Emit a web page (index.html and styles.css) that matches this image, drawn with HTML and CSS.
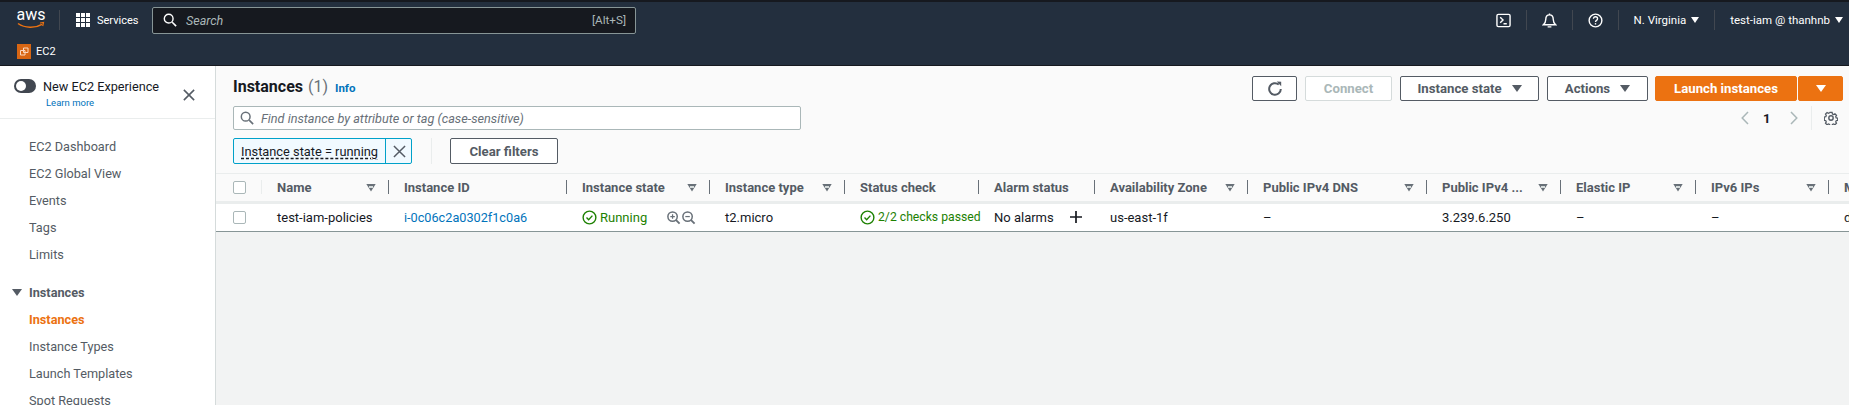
FILE: index.html
```html
<!DOCTYPE html>
<html lang="en">
<head>
<meta charset="utf-8">
<title>Instances | EC2</title>
<link rel="stylesheet" href="styles.css">
</head>
<body>
<header class="console">
  <div class="nav-top">
    <svg class="aws" viewBox="0 0 30 26" width="30" height="26"><text x="15" y="13" text-anchor="middle" class="aws-text">aws</text><path d="M2 16.500c7 4.800 17 5 24 .8" fill="none" stroke="#ec7211" stroke-width="1.500"/><path d="M24 16l3.500-.5-.8 3.500" fill="none" stroke="#ec7211" stroke-width="1.200"/></svg>
    <span class="sep sep-logo"></span>
    <svg class="grid-ic" viewBox="0 0 14 14" width="14" height="14"><path fill="#fff" d="M0 0h4v4H0zM5 0h4v4H5zM10 0h4v4h-4zM0 5h4v4H0zM5 5h4v4H5zM10 5h4v4h-4zM0 10h4v4H0zM5 10h4v4H5zM10 10h4v4h-4z"/></svg>
    <span class="services">Services</span>
    <div class="search">
      <svg viewBox="0 0 16 16" width="14" height="14"><circle cx="6.500" cy="6.500" r="5" fill="none" stroke="#fff" stroke-width="1.600"/><path d="M10.500 10.500l4.500 4.500" stroke="#fff" stroke-width="1.800"/></svg>
      <span class="search-ph">Search</span>
      <span class="search-key">[Alt+S]</span>
    </div>
    <div class="top-right">
      <svg viewBox="0 0 16 16" width="15" height="15"><rect x="1" y="1.500" width="14" height="13" rx="1.500" fill="none" stroke="#fff" stroke-width="1.500"/><path d="M4.500 4.500l3 3-3 3M8 11.500h3.500" fill="none" stroke="#fff" stroke-width="1.500"/></svg>
      <span class="sep"></span>
      <svg viewBox="0 0 16 16" width="15" height="15"><path d="M1.500 12.500c1.800-1.500 2.500-2.500 2.500-5.500 0-3 1.800-5 4-5s4 2 4 5c0 3 .7 4 2.500 5.500z" fill="none" stroke="#fff" stroke-width="1.500"/><path d="M6 14.800h4M8 .5v1.500" stroke="#fff" stroke-width="1.500"/></svg>
      <span class="sep"></span>
      <svg viewBox="0 0 16 16" width="15" height="15"><circle cx="8" cy="8" r="6.800" fill="none" stroke="#fff" stroke-width="1.500"/><path d="M5.800 6.200c0-1.300 1-2.200 2.200-2.200s2.200.9 2.200 2.100c0 1.800-2.200 1.700-2.200 3.400" fill="none" stroke="#fff" stroke-width="1.400"/><path d="M8 10.800v1.500" stroke="#fff" stroke-width="1.500"/></svg>
      <span class="sep"></span>
      <span class="top-menu">N. Virginia<i class="tri tri-light"></i></span>
      <span class="sep"></span>
      <span class="top-menu">test-iam @ thanhnb<i class="tri tri-light"></i></span>
    </div>
  </div>
  <div class="nav-sub">
    <svg viewBox="0 0 14 15" width="14" height="15"><rect width="14" height="15" fill="#d86613"/><path d="M6.500 4h4.500v4.500H6.500zM3.500 6.500H8V11H3.500z" fill="none" stroke="#fbd8bf" stroke-width="1"/></svg>
    <span>EC2</span>
  </div>
</header>
<div class="shell">
  <aside class="side">
    <div class="exp">
      <div class="exp-main">
        <div class="exp-row"><span class="toggle"></span><span>New EC2 Experience</span></div>
        <a class="learn">Learn more</a>
      </div>
      <svg class="x" viewBox="0 0 14 14" width="12" height="12"><path d="M1 1l12 12M13 1L1 13" stroke="#545b64" stroke-width="1.800"/></svg>
    </div>
    <nav class="side-nav">
      <a>EC2 Dashboard</a>
      <a>EC2 Global View</a>
      <a>Events</a>
      <a>Tags</a>
      <a>Limits</a>
      <h4><i class="tri tri-dark"></i>Instances</h4>
      <a class="on">Instances</a>
      <a>Instance Types</a>
      <a>Launch Templates</a>
      <a>Spot Requests</a>
    </nav>
  </aside>
  <main class="main">
    <section class="card">
      <div class="head">
        <div class="head-left">
          <div class="title"><h1>Instances</h1><span class="count">(1)</span><a class="info">Info</a></div>
          <div class="find">
            <svg viewBox="0 0 16 16" width="14" height="14"><circle cx="6.500" cy="6.500" r="5" fill="none" stroke="#687078" stroke-width="1.700"/><path d="M10.500 10.500l4.500 4.500" stroke="#687078" stroke-width="1.900"/></svg>
            <span>Find instance by attribute or tag (case-sensitive)</span>
          </div>
          <div class="filters">
            <div class="token"><span class="token-text"><u>Instance state = running</u></span><span class="token-x"><svg viewBox="0 0 14 14" width="13" height="13"><path d="M1 1l12 12M13 1L1 13" stroke="#545b64" stroke-width="1.600"/></svg></span></div>
            <span class="vbar"></span>
            <button class="btn clear">Clear filters</button>
          </div>
        </div>
        <div class="head-right">
          <div class="actions">
            <button class="btn refresh"><svg viewBox="0 0 16 16" width="16" height="16"><path d="M13.800 8a5.800 5.800 0 1 1-2-4.400" fill="none" stroke="#545b64" stroke-width="2"/><path d="M9.800 .5l4.400.2v4.600z" fill="#545b64"/></svg></button>
            <button class="btn dis">Connect</button>
            <button class="btn state">Instance state<i class="tri tri-dark"></i></button>
            <button class="btn act">Actions<i class="tri tri-dark"></i></button>
            <div class="launch"><button class="btn pri pri-a">Launch instances</button><button class="btn pri pri-b"><i class="tri tri-light"></i></button></div>
          </div>
          <div class="pager">
            <svg viewBox="0 0 8 14" width="8" height="14"><path d="M7 1L1.200 7 7 13" fill="none" stroke="#aab7b8" stroke-width="1.500"/></svg>
            <b>1</b>
            <svg viewBox="0 0 8 14" width="8" height="14"><path d="M1 1l5.800 6L1 13" fill="none" stroke="#aab7b8" stroke-width="1.500"/></svg>
            <span class="vbar-short"></span>
            <svg viewBox="0 0 16 16" width="14" height="14"><circle cx="8" cy="8" r="2.500" fill="none" stroke="#545b64" stroke-width="1.600"/><path d="M6.600 1h2.800l.4 1.900 1.500.7 1.700-1 2 2-1 1.700.6 1.500 1.900.4v2.800l-1.900.4-.6 1.500 1 1.700-2 2-1.700-1-1.500.6-.4 1.900H6.600l-.4-1.900-1.500-.6-1.700 1-2-2 1-1.700-.6-1.500-1.900-.4V6.700l1.900-.4.6-1.500-1-1.700 2-2 1.700 1 1.500-.7z" fill="none" stroke="#545b64" stroke-width="1.600" transform="translate(.8 .8) scale(.9)"/></svg>
          </div>
        </div>
      </div>
      <div class="table">
        <div class="row hdr">
          <div class="c c0"><span class="check"></span></div>
          <div class="c"><span class="lbl">Name</span><i class="ft"></i></div>
          <div class="c"><span class="lbl">Instance ID</span></div>
          <div class="c"><span class="lbl">Instance state</span><i class="ft"></i></div>
          <div class="c"><span class="lbl">Instance type</span><i class="ft"></i></div>
          <div class="c"><span class="lbl">Status check</span></div>
          <div class="c"><span class="lbl">Alarm status</span></div>
          <div class="c"><span class="lbl">Availability Zone</span><i class="ft"></i></div>
          <div class="c"><span class="lbl">Public IPv4 DNS</span><i class="ft"></i></div>
          <div class="c"><span class="lbl">Public IPv4 ...</span><i class="ft"></i></div>
          <div class="c"><span class="lbl">Elastic IP</span><i class="ft"></i></div>
          <div class="c"><span class="lbl">IPv6 IPs</span><i class="ft"></i></div>
          <div class="c last"><span class="lbl">Monitoring</span></div>
        </div>
        <div class="row body">
          <div class="c c0"><span class="check"></span></div>
          <div class="c">test-iam-policies</div>
          <div class="c"><a class="link">i-0c06c2a0302f1c0a6</a></div>
          <div class="c green"><svg class="ok" viewBox="0 0 16 16" width="15" height="15"><circle cx="8" cy="8" r="6.800" fill="none" stroke="#1d8102" stroke-width="1.500"/><path d="M4.800 8l2.300 2.300 4-4.300" fill="none" stroke="#1d8102" stroke-width="1.500"/></svg>Running<span class="zooms"><svg viewBox="0 0 16 16" width="15" height="15"><circle cx="7" cy="7" r="5" fill="none" stroke="#687078" stroke-width="1.600"/><path d="M10.500 10.500l4 4" stroke="#687078" stroke-width="2"/><path d="M4.600 7h4.800M7 4.600v4.800" stroke="#687078" stroke-width="1.300"/></svg><svg viewBox="0 0 16 16" width="15" height="15"><circle cx="7" cy="7" r="5" fill="none" stroke="#687078" stroke-width="1.600"/><path d="M10.500 10.500l4 4" stroke="#687078" stroke-width="2"/><path d="M4.600 7h4.800" stroke="#687078" stroke-width="1.300"/></svg></span></div>
          <div class="c">t2.micro</div>
          <div class="c green checks"><svg class="ok" viewBox="0 0 16 16" width="15" height="15"><circle cx="8" cy="8" r="6.800" fill="none" stroke="#1d8102" stroke-width="1.500"/><path d="M4.800 8l2.300 2.300 4-4.300" fill="none" stroke="#1d8102" stroke-width="1.500"/></svg>2/2 checks passed</div>
          <div class="c">No alarms<svg class="plus" viewBox="0 0 14 14" width="14" height="14"><path d="M7 1v12M1 7h12" stroke="#16191f" stroke-width="1.700"/></svg></div>
          <div class="c">us-east-1f</div>
          <div class="c">–</div>
          <div class="c">3.239.6.250</div>
          <div class="c">–</div>
          <div class="c">–</div>
          <div class="c last">disabled</div>
        </div>
      </div>
    </section>
  </main>
</div>
</body>
</html>
```
FILE: styles.css
```css
* { box-sizing: border-box; }
html, body { margin: 0; height: 405px; overflow: hidden; }
body { font-family: Roboto, sans-serif; font-size: 13px; color: #16191f; background: #f2f3f3; }
button { font: inherit; }
.console { background: #232f3e; border-top: 2px solid #16191f; height: 66px; border-bottom: 1px solid #16191f; color: #fff; }
.nav-top { height: 36px; display: flex; align-items: center; padding-left: 16px; font-size: 11.500px; }
.aws { display: block; flex: none; overflow: visible; }
.aws-text { font-size: 16px; fill: #fff; font-family: Roboto, sans-serif; }
.sep { width: 1px; height: 20px; background: #414750; flex: none; }
.sep-logo { margin: 0 16px 0 13px; }
.grid-ic { margin-right: 7px; }
.services { margin-right: 15px; font-size: 11px; width: 40px; }
.search { width: 484px; height: 27px; background: #16191f; border: 1px solid #879596; border-radius: 2px; display: flex; align-items: center; padding: 0 9px 0 10px; gap: 9px; font-size: 12.500px; color: #aab7b8; }
.search-ph { font-style: italic; }
.search-key { margin-left: auto; font-size: 11.700px; }
.top-right { margin-left: auto; display: flex; align-items: center; gap: 15px; padding-right: 6px; }
.top-menu { display: flex; align-items: center; gap: 5px; }
.tri { display: inline-block; flex: none; width: 0; height: 0; border-left: 5px solid transparent; border-right: 5px solid transparent; border-top: 7px solid; }
.top-menu .tri { border-left-width: 4px; border-right-width: 4px; border-top-width: 6px; }
.tri-light { color: #fff; }
.tri-dark { color: #545b64; }
.nav-sub { height: 27px; display: flex; align-items: center; gap: 5px; padding-left: 17px; font-size: 11px; }
.shell { display: flex; height: 339px; }
.side { width: 216px; background: #fff; border-right: 1px solid #d5dbdb; flex: none; overflow: hidden; font-size: 12.700px; }
.exp { height: 53px; border-bottom: 1px solid #eaeded; padding: 12px 20px 0 14px; display: flex; align-items: flex-start; justify-content: space-between; }
.exp-row { display: flex; align-items: center; gap: 7px; height: 16px; }
.toggle { width: 22px; height: 14px; border-radius: 7px; background: #414750; position: relative; }
.toggle::after { content: ""; position: absolute; left: 2px; top: 2px; width: 10px; height: 10px; border-radius: 50%; background: #fff; }
.learn { display: block; margin: 3px 0 0 32px; font-size: 9.500px; color: #0073bb; }
.x { margin-top: 11px; }
.side-nav { padding-top: 14px; display: flex; flex-direction: column; }
.side-nav a { height: 27px; flex: none; padding-left: 29px; display: flex; align-items: center; color: #545b64; }
.side-nav h4 { margin: 10px 0 0; height: 28px; padding-left: 12px; display: flex; align-items: center; gap: 7px; font-size: 12.700px; font-weight: 700; color: #545b64; }
.side-nav a.on { color: #ec7211; font-weight: 700; }
.main { flex: 1; min-width: 0; overflow: hidden; }
.head { background: #fafafa; padding: 10px 6px 0 17px; height: 107px; display: flex; justify-content: space-between; }
.title { display: flex; align-items: baseline; height: 22px; }
.title h1 { margin: 0; font-size: 16px; font-weight: 700; line-height: 22px; }
.count { font-size: 16px; color: #687078; margin-left: 5px; }
.info { font-size: 11.500px; font-weight: 700; color: #0073bb; margin-left: 7px; }
.find { margin-top: 8px; width: 568px; height: 24px; background: #fff; border: 1px solid #aab7b8; border-radius: 2px; display: flex; align-items: center; gap: 7px; padding: 0 6px; font-size: 12.700px; font-style: italic; color: #687078; }
.filters { margin-top: 8px; display: flex; align-items: center; height: 26px; }
.token { display: flex; height: 26px; border: 1px solid #00a1c9; border-radius: 2px; background: #f1faff; width: 179px; }
.token-text { flex: 1; padding: 0 7px; display: flex; align-items: center; white-space: nowrap; font-size: 12.800px; }
.token-text u { text-decoration: underline dashed #16191f; text-underline-offset: 2px; }
.token-x { width: 27px; flex: none; border-left: 1px solid #00a1c9; display: flex; align-items: center; justify-content: center; }
.vbar { width: 1px; height: 26px; background: #eaeded; margin: 0 18px 0 19px; }
.btn { height: 25px; border: 1px solid #545b64; border-radius: 2px; background: #fff; color: #545b64; font-weight: 700; font-size: 13.200px; display: flex; align-items: center; justify-content: center; gap: 10px; padding: 0; white-space: nowrap; }
.clear { width: 108px; height: 26px; }
.head-right { display: flex; flex-direction: column; align-items: flex-end; }
.actions { display: flex; gap: 8px; }
.refresh { width: 45px; }
.dis { width: 87px; border-color: #d5dbdb; color: #aab7b8; }
.state { width: 139px; }
.act { width: 101px; }
.launch { display: flex; gap: 1px; margin-left: -1px; }
.pri { background: #ec7211; border-color: #ec7211; color: #fff; }
.pri-a { width: 142px; }
.pri-b { width: 45px; }
.pager { display: flex; align-items: center; gap: 13px; margin: 5px 5px 0 0; height: 24px; }
.pager b { width: 8px; margin: 0 6px 0 1px; font-weight: 700; }
.vbar-short { width: 1px; height: 24px; background: #eaeded; margin-right: -1px; }
.row { display: grid; grid-template-columns: 46px 127px 178px 143px 135px 134px 116px 153px 179px 134px 135px 133px 100px; white-space: nowrap; }
.hdr { height: 31px; background: #fafafa; border-top: 1px solid #eaeded; border-bottom: 3px solid #eaeded; font-weight: 700; color: #545b64; }
.body { height: 28px; padding-bottom: 1px; background: #fff; border-bottom: 1px solid #879596; }
.c { display: flex; align-items: center; padding: 0 13px 0 15px; position: relative; min-width: 0; }
.lbl { flex: 1; }
.hdr .c::after { content: ""; position: absolute; right: 0; top: 6px; height: 14px; width: 1px; background: #687078; }
.hdr .c0::after { background: #eaeded; }
.hdr .last::after { display: none; }
.c0 { padding: 0 0 0 17px; }
.check { flex: none; width: 13px; height: 13px; border: 1px solid #aab7b8; border-radius: 2px; background: #fff; }
.ft { width: 10px; height: 8px; flex: none; background: #687078; clip-path: polygon(0 0, 100% 0, 50% 100%); position: relative; }
.ft::after { content: ""; position: absolute; left: 3px; top: 2px; width: 4px; height: 2px; background: #d5dbdb; }
.link { color: #0073bb; font-size: 12.700px; }
.green { color: #1d8102; }
.checks { font-size: 12.200px; }
.ok { flex: none; margin-right: 3px; }
.zooms { display: flex; margin-left: auto; margin-right: 1px; }
.plus { flex: none; margin-left: 15px; }
.last { overflow: hidden; }
```
